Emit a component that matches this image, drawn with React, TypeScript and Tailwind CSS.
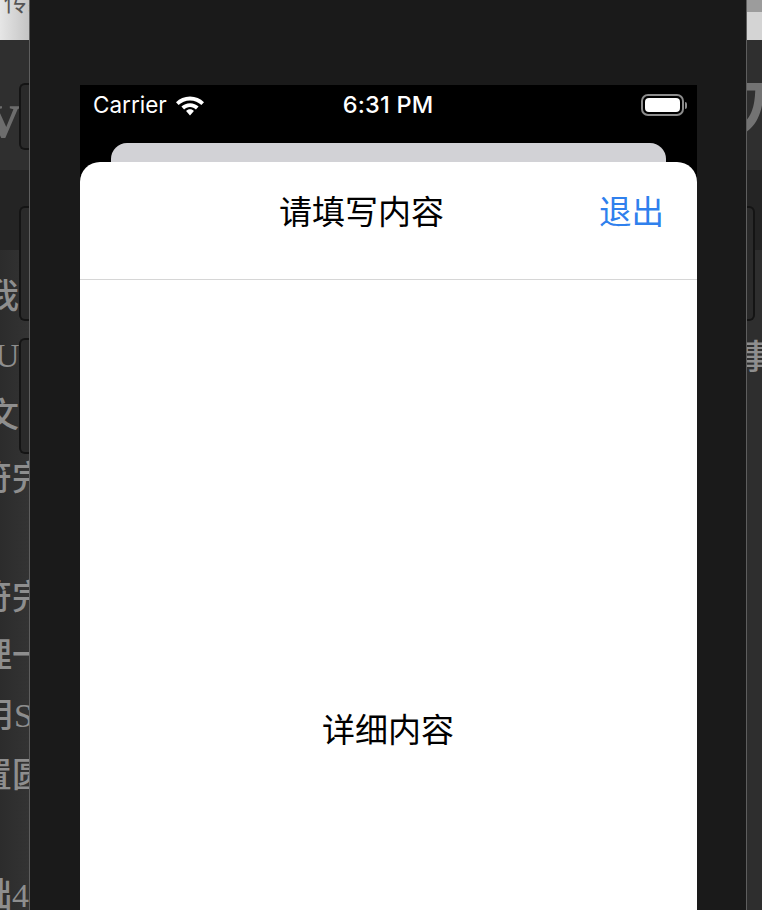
const serif = { fontFamily: '"Liberation Serif", "Noto Sans CJK SC", serif' };

function Handle({ className }: { className: string }) {
  return <div className={`absolute rounded-l-[6px] border-2 border-r-0 border-[#141414] bg-[#2a2a2a] ${className}`} />;
}

function LeftLine({ text, className }: { text: string; className: string }) {
  return (
    <div className={`flex items-center overflow-hidden whitespace-nowrap text-[34px] font-medium text-[#8e8e8e] ${className}`}>
      <span className="shrink-0">{text}</span>
    </div>
  );
}

function LeftStrip() {
  return (
    <div className="relative w-[30px] shrink-0 h-full overflow-hidden border-r border-[#5e5e5e] bg-[#2e2e2e]" style={serif}>
      <div className="h-[40px] bg-gradient-to-r from-[#e6e6e6] to-[#c4c4c4] overflow-hidden">
        <div className="-mt-[9px] pl-[4px] text-[24px] leading-[24px] text-[#555] whitespace-nowrap">传统</div>
      </div>
      <div className="h-[130px] flex justify-end overflow-hidden bg-[#2f2f2f] pt-[40px] pr-[9px]">
        <span className="text-[68px] font-bold text-[#6d6d6d] leading-none">bv</span>
      </div>
      <div className="h-[80px] bg-[#242424]" />
      <div className="bg-gradient-to-r from-[#2c2c2c] to-[#333] pt-[17px]">
        <LeftLine text="我" className="h-[59px] -ml-[15px]" />
        <LeftLine text="U" className="h-[58px] -ml-[5px]" />
        <LeftLine text="文" className="h-[62px] -ml-[15px]" />
        <LeftLine text="符完" className="h-[64px] -ml-[22px]" />
        <div className="h-[57px]" />
        <LeftLine text="符完" className="h-[60px] -ml-[22px]" />
        <LeftLine text="理一" className="h-[56px] -ml-[22px]" />
        <LeftLine text="用S" className="h-[64px] -ml-[20px]" />
        <LeftLine text="置圆" className="h-[56px] -ml-[22px]" />
        <div className="h-[62px]" />
        <LeftLine text="础4" className="h-[60px] -ml-[22px]" />
      </div>
      <Handle className="left-[19px] top-[83px] h-[67px] w-[12px]" />
      <Handle className="left-[19px] top-[206px] h-[115px] w-[12px]" />
      <Handle className="left-[19px] top-[338px] h-[116px] w-[12px]" />
    </div>
  );
}

function RightStrip() {
  return (
    <div className="relative flex-1 h-full overflow-hidden border-l border-[#5e5e5e] bg-[#2e2e2e]" style={serif}>
      <div className="h-[12px] bg-[#9c9c9c]" />
      <div className="h-[28px] bg-[#d4d4d4]" />
      <div className="h-[130px] flex items-center overflow-hidden bg-[#2f2f2f]">
        <span className="-ml-[14px] mt-[8px] text-[62px] font-bold text-[#737373] leading-none whitespace-nowrap">刀</span>
      </div>
      <div className="h-[80px] bg-[#242424]" />
      <div className="pt-[86px] -ml-[8px] text-[34px] font-medium leading-[44px] text-[#8e8e8e] whitespace-nowrap">事</div>
      <div className="absolute -left-[2px] top-[206px] h-[115px] w-[10px] rounded-r-[6px] border-2 border-l-0 border-[#141414] bg-[#2a2a2a]" />
    </div>
  );
}

function StatusBar() {
  return (
    <div className="flex h-[40px] items-center justify-between px-[13px] text-white" style={{ fontFamily: 'Inter, sans-serif' }}>
      <div className="flex flex-1 items-center gap-[8px]">
        <span className="text-[22.5px] font-normal">Carrier</span>
        <svg width="30" height="22" viewBox="0 0 30 22" fill="white">
          <path d="M15 2.5C9.4 2.5 4.6 4.6 1 8.2l2.6 2.8C6.5 8.1 10.5 6.4 15 6.4s8.5 1.7 11.4 4.6L29 8.2C25.400 4.600 20.600 2.500 15 2.500z" />
          <path d="M15 9.200c-3.300 0-6.400 1.300-8.600 3.400l2.700 2.800c1.500-1.500 3.600-2.400 5.900-2.400s4.400.9 5.900 2.400l2.700-2.800c-2.200-2.100-5.300-3.400-8.600-3.400z" />
          <path d="M15 15.300c-1.500 0-2.900.6-3.900 1.600L15 21.500l3.900-4.600c-1-1-2.400-1.600-3.900-1.600z" />
        </svg>
      </div>
      <span className="-ml-[4px] text-[23.5px] font-medium tracking-[0.2px]">6:31 PM</span>
      <div className="flex flex-1 items-center justify-end -mr-[3px]">
        <div className="h-[22px] w-[43px] rounded-[7px] border-2 border-[#8c8c8c] p-[2px]">
          <div className="h-full w-full rounded-[4px] bg-white" />
        </div>
        <div className="ml-[1px] h-[7px] w-[2px] rounded-r-[2px] bg-[#8c8c8c]" />
      </div>
    </div>
  );
}

export default function App() {
  return (
    <div
      className="flex h-[910px] w-[762px] overflow-hidden bg-[#1a1a1a]"
      style={{ fontFamily: '"Noto Sans CJK SC", sans-serif' }}
    >
      <LeftStrip />

      {/* Simulator */}
      <div className="h-full w-[716px] shrink-0 bg-[#1a1a1a] px-[50px] pt-[85px]">
        <div className="h-[825px] w-[617px] overflow-hidden bg-black">
          <StatusBar />
          <div className="mx-[31px] mt-[18px] h-[19px] rounded-t-[16px] bg-[#d2d2d6]" />
          <div className="h-[748px] rounded-t-[20px] bg-white">
            <div className="flex h-[118px] items-center border-b border-[#d6d6d6] pl-[199px] pr-[33px] pb-[21px]">
              <span className="flex-1 text-[33px] leading-none text-black">请填写内容</span>
              <span className="text-[32.500px] leading-none text-[#2f80ed]">退出</span>
            </div>
            <div className="flex justify-center pt-[425px]">
              <span className="-ml-[1px] text-[33px] leading-[46px] text-black">详细内容</span>
            </div>
          </div>
        </div>
      </div>

      <RightStrip />
    </div>
  );
}
